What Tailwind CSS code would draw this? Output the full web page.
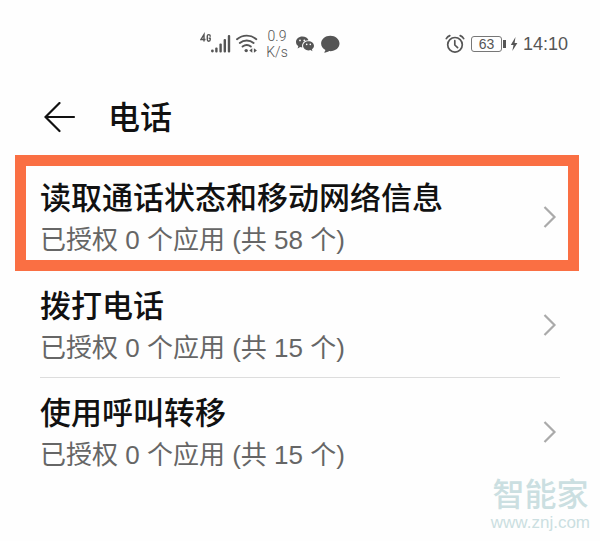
<!DOCTYPE html>
<html lang="zh-CN">
<head>
  <meta charset="UTF-8" />
  <meta name="viewport" content="width=device-width, initial-scale=1.0" />
  <title>电话</title>
  <script src="https://cdn.jsdelivr.net/npm/@tailwindcss/browser@4"></script>
</head>
<body class="flex min-h-screen flex-col bg-[#fefefe] font-['Liberation_Sans','Noto_Sans_CJK_SC',sans-serif] text-[#111111]">
  <!-- Status bar -->
  <div class="flex h-[88px] items-center justify-between pr-8 pl-[200px] text-[#555555]">
    <div class="flex items-center">
      <svg class="h-6 w-[31px]" viewBox="0 0 31 24" fill="currentColor" role="img" aria-label="4G">
        <g fill="none" stroke="currentColor" stroke-width="1.4">
          <path d="M4 9.500V2.500L1 7.500h4.500" />
          <path d="M10.200 4.800V4.100a1.400 1.400 0 0 0-2.900 0v3.700a1.400 1.400 0 0 0 2.900 0V6.200H8.700" />
        </g>
        <circle cx="12.4" cy="19" r="1.4" />
        <rect x="15.2" y="15.5" width="2.4" height="5" rx="1" />
        <rect x="19.4" y="11.5" width="2.4" height="9" rx="1" />
        <rect x="23.6" y="7" width="2.4" height="13.5" rx="1" />
        <rect x="27.8" y="3" width="2.4" height="17.5" rx="1" />
      </svg>
      <svg class="ml-1 h-6 w-6" viewBox="0 0 24 24" fill="none" stroke="currentColor" stroke-width="1.9" stroke-linecap="round">
        <path d="M2 7.2c5.7-4.8 13.8-4.8 19.3 0M4.8 11c4-3.3 9.8-3.3 13.8 0M7.6 14.6c2.5-2 5.8-2 8.2 0" />
        <circle cx="11.2" cy="18.6" r="1.7" fill="currentColor" stroke="none" />
        <path d="M17.3 16.2v4.6l-3-2.3zM18.9 16.2v4.6l3-2.3z" fill="currentColor" stroke="none" />
      </svg>
      <div class="ml-1 w-7 text-center font-[Roboto] text-[14px] leading-4 font-light">0.9<br />K/s</div>
      <svg class="ml-1 h-6 w-5" viewBox="0 0 20 24" fill="currentColor">
        <path d="M7.300 4.500C3.800 4.500 1 6.900 1 10c0 1.800.9 3.200 2.300 4.200l-.7 2.200 2.600-1.300c.8.2 1.200.3 2.100.3-1-4.100 2-7.300 6.200-7.200C12.900 6 10.300 4.500 7.300 4.500z" />
        <path d="M13.500 9.200c-3 0-5.400 2-5.400 4.600s2.400 4.600 5.400 4.600c.7 0 1.300-.1 1.900-.3l2.100 1.200-.6-1.900c1.300-.9 2.100-2.100 2.100-3.600 0-2.600-2.500-4.600-5.500-4.600z" />
        <g fill="#fefefe">
          <circle cx="5" cy="8.400" r=".9" /><circle cx="9.300" cy="8.400" r=".9" />
          <circle cx="11.700" cy="12.400" r=".8" /><circle cx="15.300" cy="12.400" r=".8" />
        </g>
      </svg>
      <svg class="ml-[5px] h-6 w-5" viewBox="0 0 20 24" fill="currentColor">
        <path d="M10.300 3.700c-5.100 0-9.200 3.400-9.200 7.800 0 2.800 1.700 5.200 4.300 6.500-.1 1-.6 1.800-1.400 2.600 2 .1 3.700-.5 5.100-1.500 5.800.5 10.400-3 10.400-7.600 0-4.400-4.100-7.800-9.200-7.800z" />
      </svg>
    </div>
    <div class="flex items-center">
      <svg class="h-5 w-5" viewBox="0 0 20 20" fill="none" stroke="currentColor" stroke-width="1.7" stroke-linecap="round">
        <circle cx="10" cy="10.800" r="7.300" />
        <path d="M9.800 6.700v4.300l2.800 2.700M1.300 4.600a8 8 0 0 1 3.500-3M18.700 4.600a8 8 0 0 0-3.500-3" />
      </svg>
      <div class="ml-[6px] flex h-4 w-[31px] items-center justify-center rounded-[3px] border border-[#777777] text-[14px] leading-none">63</div>
      <div class="ml-px h-2 w-[3px] bg-[#555555]"></div>
      <svg class="ml-1 h-4 w-2" viewBox="0 0 8 16" fill="currentColor"><path d="M5.500 1 .8 9h2.700L2.300 15 7.400 7H4.600z" /></svg>
      <time class="ml-[5px] text-[18px] leading-6">14:10</time>
    </div>
  </div>

  <!-- Title -->
  <header class="flex h-[67px] items-center pb-2 pl-11">
    <button type="button" aria-label="返回">
      <svg class="h-8 w-8" viewBox="0 0 32 32" fill="none" stroke="currentColor" stroke-width="2.2" stroke-linecap="round">
        <path d="M30 15H1.500M15.500 1 1.500 15l14 14" />
      </svg>
    </button>
    <h1 class="ml-8 text-[32px] leading-10 font-medium">电话</h1>
  </header>

  <!-- Permission list -->
  <main>
    <a href="#" class="mr-[21px] ml-[15px] flex items-center justify-between border-[11px] border-[#fa6f43] pt-[11px] pr-[10px] pl-[14px]">
      <div>
        <h2 class="text-[31px] leading-[44px] font-medium">读取通话状态和移动网络信息</h2>
        <p class="text-[26px] leading-[39px] text-[#666666]">已授权 0 个应用 (共 58 个)</p>
      </div>
      <svg class="mb-1 h-6 w-4" viewBox="0 0 16 24" fill="none" stroke="#aaaaaa" stroke-width="2.2"><path d="M2.500 2 12.500 12l-10 10" /></svg>
    </a>
    <a href="#" class="mx-10 flex items-center justify-between border-b border-[#dddddd] pt-[14px] pr-[2px] pb-[9px]">
      <div>
        <h2 class="text-[31px] leading-[44px] font-medium">拨打电话</h2>
        <p class="text-[26px] leading-[39px] text-[#666666]">已授权 0 个应用 (共 15 个)</p>
      </div>
      <svg class="mb-1 h-6 w-4" viewBox="0 0 16 24" fill="none" stroke="#aaaaaa" stroke-width="2.2"><path d="M2.500 2 12.500 12l-10 10" /></svg>
    </a>
    <a href="#" class="mx-10 flex items-center justify-between pt-[14px] pr-[2px]">
      <div>
        <h2 class="text-[31px] leading-[44px] font-medium">使用呼叫转移</h2>
        <p class="text-[26px] leading-[39px] text-[#666666]">已授权 0 个应用 (共 15 个)</p>
      </div>
      <svg class="mb-1 h-6 w-4" viewBox="0 0 16 24" fill="none" stroke="#aaaaaa" stroke-width="2.2"><path d="M2.500 2 12.500 12l-10 10" /></svg>
    </a>
  </main>

  <footer class="mt-auto mr-[10px] mb-2 self-end text-center text-[#cbdfe1]">
    <div class="text-[32px] leading-9 font-medium">智能家</div>
    <div class="text-[17px] leading-5">www.znj.com</div>
  </footer>
</body>
</html>
